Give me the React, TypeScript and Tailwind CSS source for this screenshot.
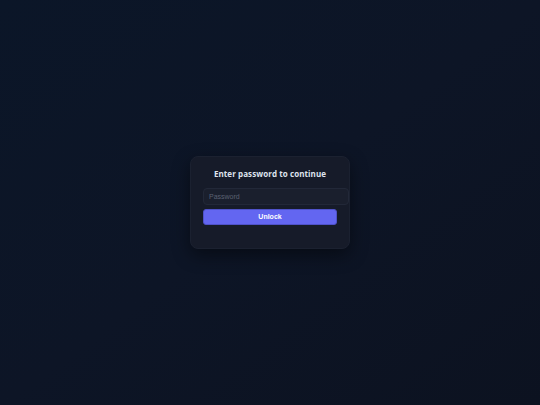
import { useState } from 'react'

export default function App() {
  const [pw, setPw] = useState('')

  return (
    <main className="min-h-screen w-full flex items-center justify-center bg-gradient-to-br from-[#0b1628] via-[#0d1526] to-[#0c1220]">
      <div className="w-[160px] rounded-[8px] bg-[#161b29] border border-[#1b2130] shadow-[0_6px_18px_rgba(0,0,0,0.45)] px-[12px] pt-[11px] pb-[23px]">
        <h1 className="text-center text-[8px] leading-[12px] font-bold tracking-[0.01em] text-[#dfe3ee] font-['Open_Sans',sans-serif]">
          Enter password to continue
        </h1>
        <input
          type="password"
          value={pw}
          onChange={(e) => setPw(e.target.value)}
          placeholder="Password"
          className="mt-[8px] block w-full box-content h-[15px] px-[5px] rounded-[4px] border border-[#222838] bg-[#1a1f2d] text-[7px] text-[#c9cdd8] placeholder:text-[#5b6172] outline-none font-['Liberation_Sans',Arial,sans-serif]"
        />
        <button className="mt-[4px] block w-full h-[16px] rounded-[3px] bg-[#6366f1] border border-[#4f52c9] text-white text-[7px] font-bold font-['Liberation_Sans',Arial,sans-serif]">
          Unlock
        </button>
      </div>
    </main>
  )
}
